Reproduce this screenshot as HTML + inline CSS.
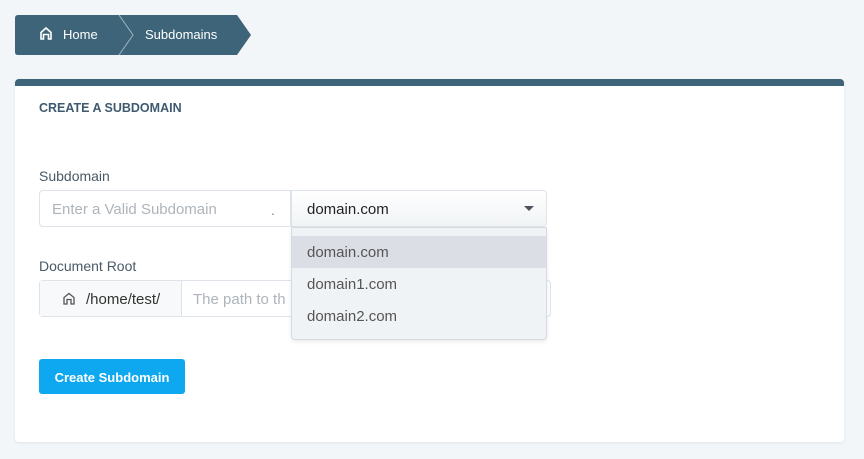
<!DOCTYPE html><html><head><style>
body{margin:0;background:#f3f6f8;font-family:"Liberation Sans",sans-serif;width:864px;height:459px;position:relative;overflow:hidden}
.a{position:absolute}
.t{font-size:14px}
</style></head><body>
<svg class="a" style="left:15px;top:15px" width="236" height="40">
<path d="M3 0H104L118 20L104 40H3Q0 40 0 37V3Q0 0 3 0Z" fill="#3d6479"/>
<path d="M104 0H222L236 20L222 40H104L118 20Z" fill="#3d6479"/>
<path d="M104 0L118 20L104 40" stroke="#9fb3bf" fill="none" stroke-width="1"/>
<path d="M26 24V17.5L31 13L36 17.5V24H33.5V19.5H28.5V24Z" fill="none" stroke="#fff" stroke-width="1.6"/>
<text x="48" y="24" fill="#fff" font-size="13" font-family="Liberation Sans">Home</text>
<text x="130" y="24" fill="#fff" font-size="13" font-family="Liberation Sans">Subdomains</text>
</svg>
<div class="a" style="left:15px;top:79px;width:829px;height:363px;background:#fff;border-top:7px solid #3d6479;border-radius:4px;box-sizing:border-box;box-shadow:0 1px 3px rgba(0,0,0,.08)"></div>
<div class="a" style="left:39px;top:101px;font-size:12.5px;font-weight:bold;color:#3f5a70">CREATE A SUBDOMAIN</div>
<div class="a t" style="left:39px;top:168px;color:#4a5a68">Subdomain</div>
<div class="a" style="left:39px;top:190px;width:252px;height:37px;border:1px solid #dde3e8;border-radius:4px 0 0 4px;box-sizing:border-box"></div>
<div class="a" style="left:52px;top:201px;font-size:15px;color:#adb4bb">Enter a Valid Subdomain</div>
<div class="a t" style="left:271px;top:202px;color:#888">.</div>
<div class="a" style="left:291px;top:190px;width:256px;height:37px;border:1px solid #dde3e8;border-radius:0 4px 4px 0;box-sizing:border-box;background:linear-gradient(#fff,#f0f3f5)"></div>
<div class="a" style="left:307px;top:201px;font-size:15px;color:#222">domain.com</div>
<div class="a" style="left:524px;top:206px;width:0;height:0;border-left:5px solid transparent;border-right:5px solid transparent;border-top:5px solid #4a5560"></div>
<div class="a t" style="left:39px;top:258px;color:#4a5a68">Document Root</div>
<div class="a" style="left:39px;top:280px;width:512px;height:37px;border:1px solid #dde3e8;border-radius:4px;box-sizing:border-box"></div>
<div class="a" style="left:40px;top:281px;width:141px;height:35px;background:#f8f9fa;border-right:1px solid #dde3e8"></div>
<svg class="a" style="left:62px;top:292px" width="14" height="14"><path d="M2 12V5.5L7 1.5L12 5.5V12H9V7.5H5V12Z" fill="none" stroke="#555" stroke-width="1.3"/></svg>
<div class="a" style="left:86px;top:291px;font-size:15px;color:#333">/home/test/</div>
<div class="a" style="left:193px;top:291px;font-size:15px;color:#adb4bb">The path to th</div>
<div class="a" style="left:291px;top:227px;width:256px;height:113px;background:#f0f3f5;border:1px solid #d5dbe0;border-radius:0 0 4px 4px;box-sizing:border-box;box-shadow:0 2px 4px rgba(0,0,0,.08)"></div>
<div class="a" style="left:292px;top:236px;width:254px;height:32px;background:#dbdee5"></div>
<div class="a" style="left:307px;top:244px;font-size:15px;color:#555">domain.com</div>
<div class="a" style="left:307px;top:276px;font-size:15px;color:#555">domain1.com</div>
<div class="a" style="left:307px;top:308px;font-size:15px;color:#555">domain2.com</div>
<div class="a" style="left:39px;top:359px;width:146px;height:35px;background:#0ea8f0;border-radius:3px;color:#fff;font-size:13px;font-weight:bold;text-align:center;line-height:37px">Create Subdomain</div>
</body></html>
